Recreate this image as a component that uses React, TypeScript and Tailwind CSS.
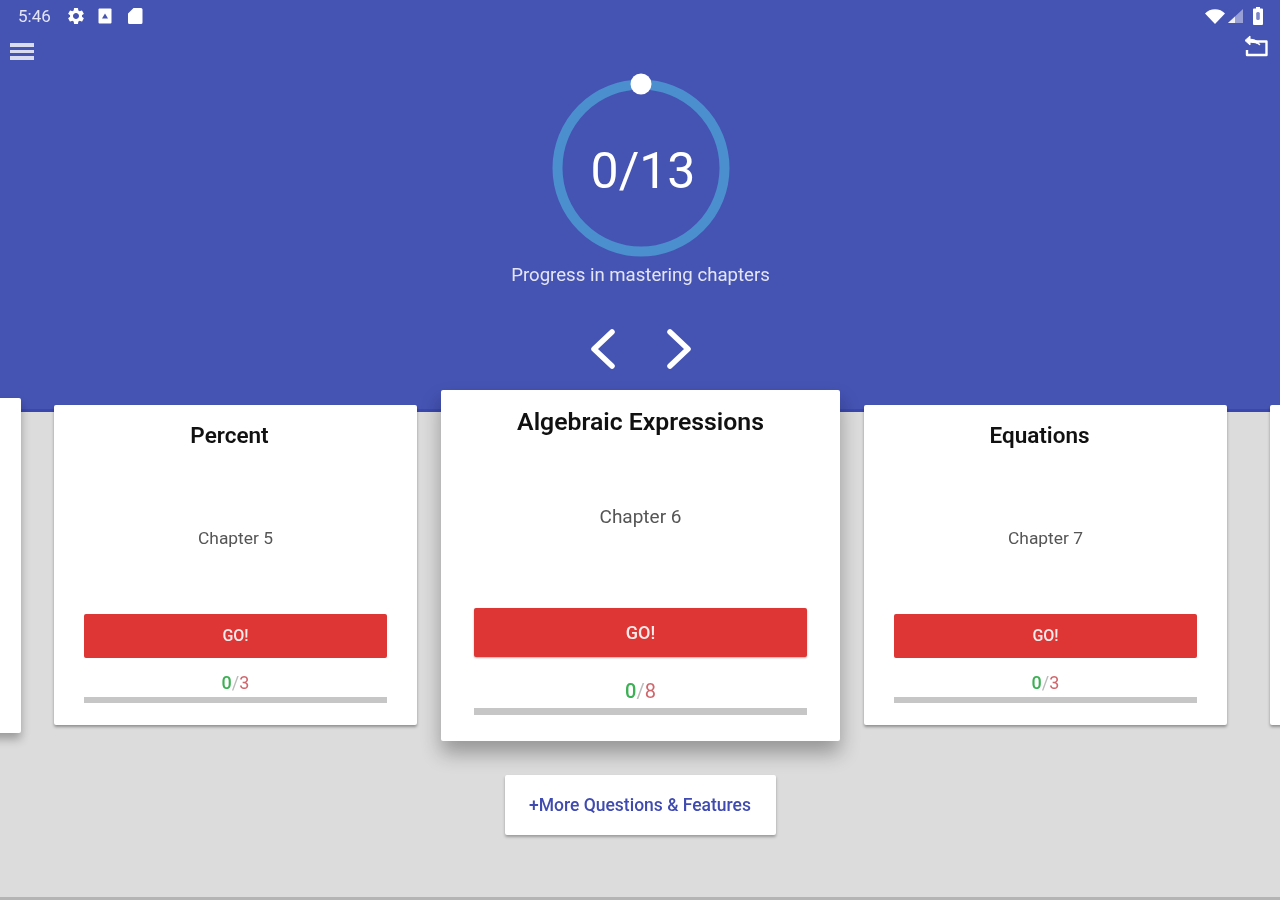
const fontStack = { fontFamily: 'Roboto, "Liberation Sans", sans-serif' };

function StatusBar() {
  return (
    <div className="h-[30px] flex items-center pl-[18px] pr-[17px] pt-[2px] text-white">
      <span className="w-[34px] text-[17px] leading-none text-white/85">5:46</span>
      {/* settings gear */}
      <svg className="w-[20px] h-[20px] ml-[14px]" viewBox="0 0 24 24" fill="#fff">
        <path d="M19.14 12.94c.04-.3.06-.61.06-.94 0-.32-.02-.64-.07-.94l2.03-1.58a.49.49 0 0 0 .12-.61l-1.92-3.32a.488.488 0 0 0-.59-.22l-2.39.96c-.5-.38-1.03-.7-1.62-.94l-.36-2.54a.484.484 0 0 0-.48-.41h-3.84c-.24 0-.43.17-.47.41l-.36 2.54c-.59.24-1.13.57-1.62.94l-2.39-.96c-.22-.08-.47 0-.59.22L2.74 8.87c-.12.21-.08.47.12.61l2.03 1.58c-.05.3-.07.62-.07.94s.02.64.07.94l-2.03 1.58a.49.49 0 0 0-.12.61l1.92 3.32c.12.22.37.29.59.22l2.39-.96c.5.38 1.03.7 1.62.94l.36 2.54c.05.24.24.41.48.41h3.84c.24 0 .44-.17.47-.41l.36-2.54c.59-.24 1.13-.56 1.62-.94l2.39.96c.22.08.47 0 .59-.22l1.92-3.32c.12-.22.07-.47-.12-.61l-2.01-1.58zM12 15.6c-1.98 0-3.6-1.62-3.6-3.6s1.62-3.6 3.6-3.6 3.6 1.62 3.6 3.6-1.62 3.6-3.6 3.6z" />
      </svg>
      {/* picture file */}
      <svg className="w-[14px] h-[16px] ml-[12px]" viewBox="0 0 14 16">
        <rect x="0.5" y="0.5" width="13" height="15" rx="1" fill="#fff" />
        <path d="M4 10.5 7 5.5l3 5z" fill="#4553b3" />
      </svg>
      {/* sd card */}
      <svg className="w-[16px] h-[18px] ml-[15px]" viewBox="0 0 16 18" fill="#fff">
        <path d="M6.5 1H14a1.5 1.5 0 0 1 1.500 1.500v13A1.500 1.500 0 0 1 14 17H2.500A1.500 1.500 0 0 1 1 15.500V6.500z" />
      </svg>
      <div className="flex-1" />
      {/* wifi */}
      <svg className="w-[20px] h-[15px]" viewBox="0 0 20 15" fill="#fff">
        <path d="M10 15 0 4.500C2.500 1.800 6 .3 10 .3s7.500 1.500 10 4.200z" />
      </svg>
      {/* signal */}
      <svg className="w-[15px] h-[14px] ml-[3px]" viewBox="0 0 15 14">
        <path d="M0 14 15 0v14z" fill="#fff" fillOpacity="0.45" />
        <path d="M0 14 7 7.500V14z" fill="#fff" fillOpacity="0.85" />
      </svg>
      {/* battery */}
      <svg className="w-[10px] h-[18px] ml-[10px]" viewBox="0 0 10 18">
        <path d="M3 0h4v1.500h2a1 1 0 0 1 1 1V17a1 1 0 0 1-1 1H1a1 1 0 0 1-1-1V2.500a1 1 0 0 1 1-1h2z" fill="#fff" />
        <rect x="3.200" y="5" width="3.600" height="8" rx="1.500" fill="#4553b3" fillOpacity="0.7" />
      </svg>
    </div>
  );
}

function ToolRow() {
  return (
    <div className="h-[40px] flex items-start justify-between pl-[10px] pr-[11px] text-white">
      <div className="flex flex-col gap-[3px] w-[24px] mt-[13px] opacity-80">
        <div className="h-[3.500px] bg-white" />
        <div className="h-[3.500px] bg-white" />
        <div className="h-[3.500px] bg-white" />
      </div>
      <svg className="w-[26px] h-[22px] mt-[5px]" viewBox="0 0 26 22" fill="none" stroke="#fff" strokeWidth="2.400" strokeLinejoin="round">
        <path d="M9 6.500h14.500v13.500H4v-5" />
        <path d="M2 5.500 7 1v3.200c5 0 8 2 10 5.800-3-2-5.500-2.800-10-2.800V10z" fill="#fff" strokeWidth="1" />
      </svg>
    </div>
  );
}

function ProgressRing() {
  return (
    <div className="relative w-[198px] h-[198px] flex items-center justify-center">
      <svg className="absolute inset-0" viewBox="0 0 198 198" fill="none">
        <circle cx="99" cy="99" r="83.500" stroke="#4b8fcf" strokeWidth="10" />
        <circle cx="99" cy="15" r="10.500" fill="#fff" />
      </svg>
      <span className="text-[50px] leading-none font-normal text-white mt-[5px] ml-[5px]">0/13</span>
    </div>
  );
}

function SideCard({ title, chapter, total }: { title: string; chapter: string; total: number }) {
  return (
    <div className="w-[363px] shrink-0 mt-[15px] pt-[15px] pb-[22px] px-[30px] bg-white rounded-[2px] shadow-[0_2px_3px_rgba(0,0,0,0.35)]">
      <h2 className="text-[22.5px] leading-[30px] font-semibold text-[#111] text-center pr-[12px]">{title}</h2>
      <p className="mt-[76px] text-[17.400px] leading-[24px] text-[#555] text-center">{chapter}</p>
      <div className="mt-[64px] h-[44px] bg-[#de3535] rounded-[2px] flex items-center justify-center text-[16px] font-medium text-white/90">GO!</div>
      <p className="mt-[13px] text-[18px] leading-[24px] text-center">
        <span className="font-medium text-[#3cb054]">0</span>
        <span className="text-[#bbb]">/</span>
        <span className="text-[#d0666c]">{total}</span>
      </p>
      <div className="mt-[2px] h-[6px] bg-[#c6c6c6]" />
    </div>
  );
}

function MainCard({ title, chapter, total }: { title: string; chapter: string; total: number }) {
  return (
    <div className="w-[399px] shrink-0 pt-[16px] pb-[26px] px-[33px] bg-white rounded-[2px] shadow-[0_12px_20px_rgba(0,0,0,0.32)]">
      <h2 className="text-[24.800px] leading-[32px] font-semibold text-[#111] text-center">{title}</h2>
      <p className="mt-[66px] text-[19px] leading-[26px] text-[#555] text-center">{chapter}</p>
      <div className="mt-[78px] h-[49px] bg-[#de3535] rounded-[2px] shadow-[0_1px_2px_rgba(0,0,0,0.3)] flex items-center justify-center text-[18px] font-medium text-white/90">GO!</div>
      <p className="mt-[21px] text-[20px] leading-[26px] text-center">
        <span className="font-medium text-[#3cb054]">0</span>
        <span className="text-[#bbb]">/</span>
        <span className="text-[#d0666c]">{total}</span>
      </p>
      <div className="mt-[4px] h-[7px] bg-[#c6c6c6]" />
    </div>
  );
}

export default function App() {
  return (
    <div style={fontStack} className="w-[1280px] h-[900px] overflow-hidden flex flex-col bg-[#dcdcdc] blur-[0.5px]">
      <header className="h-[412px] shrink-0 flex flex-col items-center bg-[#4553b3] border-b-[3px] border-[#3a48ad]">
        <div className="w-full">
          <StatusBar />
          <ToolRow />
        </div>
        <div className="-mt-[1px] ml-[1px]">
          <ProgressRing />
        </div>
        <p className="mt-[-4px] text-[18.600px] leading-[24px] text-white/85 ml-[1px]">Progress in mastering chapters</p>
        <div className="mt-[42px] flex gap-[48px] ml-[1px]">
          <svg className="w-[27px] h-[40px]" viewBox="0 0 27 40" fill="none" stroke="#fff" strokeWidth="5.500" strokeLinecap="round" strokeLinejoin="round">
            <path d="M22 3 4 20l18 17" />
          </svg>
          <svg className="w-[27px] h-[40px]" viewBox="0 0 27 40" fill="none" stroke="#fff" strokeWidth="5.500" strokeLinecap="round" strokeLinejoin="round">
            <path d="m5 3 18 17L5 37" />
          </svg>
        </div>
      </header>

      {/* chapter carousel, pulled up over the header */}
      <div className="flex items-start -mt-[32px] pt-[10px] pb-[34px] overflow-hidden">
        <div className="w-[362px] h-[335px] shrink-0 -ml-[341px] mt-[8px] bg-white rounded-[2px] shadow-[0_6px_10px_rgba(0,0,0,0.3)]" />
        <div className="ml-[33px]">
          <SideCard title="Percent" chapter="Chapter 5" total={3} />
        </div>
        <div className="ml-[24px]">
          <MainCard title="Algebraic Expressions" chapter="Chapter 6" total={8} />
        </div>
        <div className="ml-[24px]">
          <SideCard title="Equations" chapter="Chapter 7" total={3} />
        </div>
        <div className="w-[363px] h-[320px] shrink-0 ml-[43px] mt-[15px] bg-white rounded-[2px] shadow-[0_2px_3px_rgba(0,0,0,0.35)]" />
      </div>

      <div className="flex justify-center">
        <div className="w-[271px] h-[60px] flex items-center justify-center bg-white rounded-[2px] shadow-[0_2px_3px_rgba(0,0,0,0.3)] text-[17.500px] font-medium text-[#3f4bb0]">
          +More Questions &amp; Features
        </div>
      </div>

      <div className="mt-auto h-[3px] bg-[#b4b4b4]" />
    </div>
  );
}
